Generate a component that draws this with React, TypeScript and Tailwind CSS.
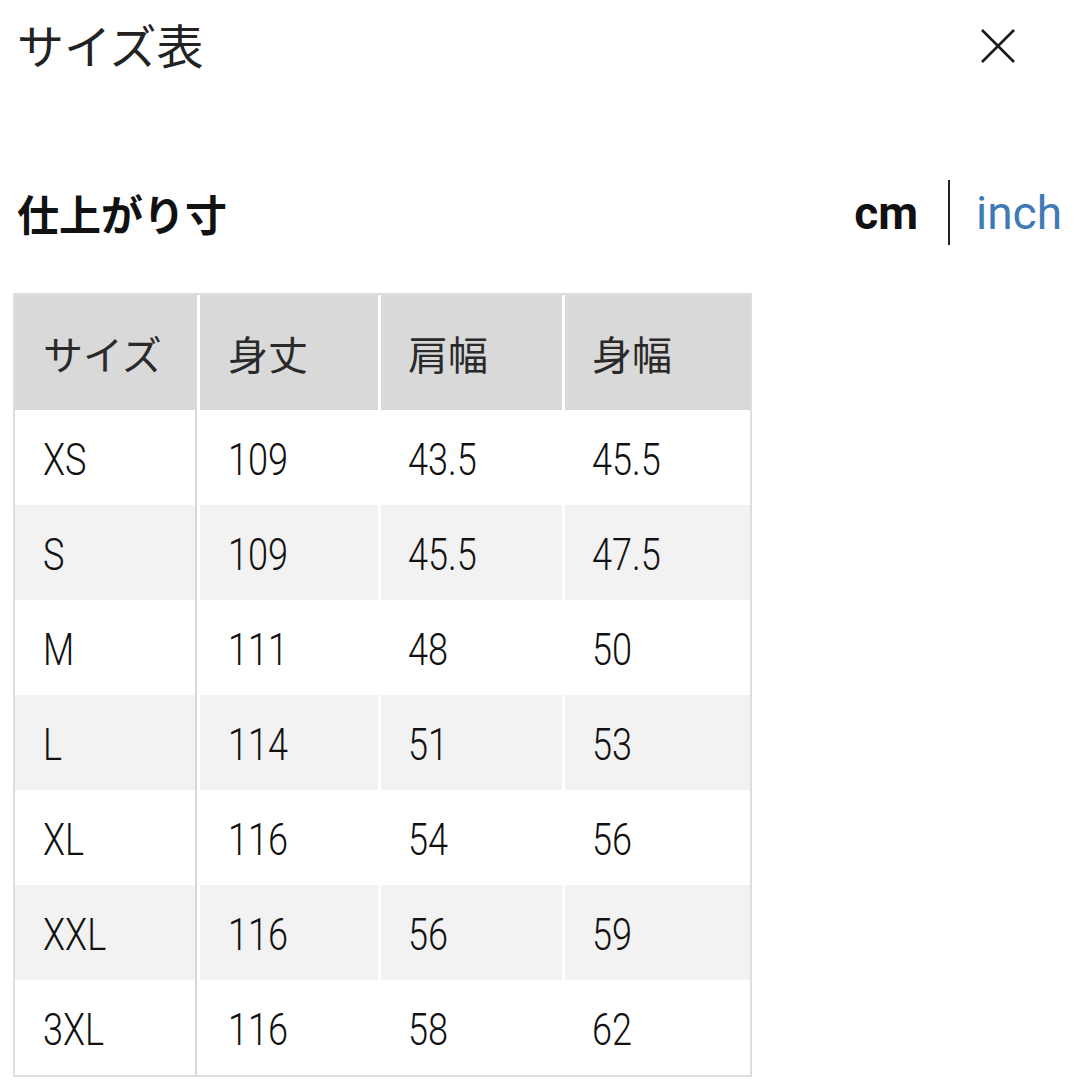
import React from "react";

const headers = ["サイズ", "身丈", "肩幅", "身幅"];
const rows: string[][] = [
  ["XS", "109", "43.5", "45.5"],
  ["S", "109", "45.5", "47.5"],
  ["M", "111", "48", "50"],
  ["L", "114", "51", "53"],
  ["XL", "116", "54", "56"],
  ["XXL", "116", "56", "59"],
  ["3XL", "116", "58", "62"],
];

const jp = { fontFamily: '"Noto Sans CJK JP", "Noto Sans", sans-serif' };
const num = { fontFamily: 'Roboto, "Liberation Sans", sans-serif' };
const latin = { fontFamily: 'Roboto, "Liberation Sans", sans-serif' };

export default function App() {
  return (
    <div className="w-[1080px] h-[1080px] bg-white overflow-hidden text-[#1f1f1f]">
      <div className="flex items-start justify-between pl-[17px] pr-[63px] pt-[20px]">
        <div className="text-[47px] leading-none font-normal text-[#222]" style={jp}>サイズ表</div>
        <svg width="38" height="38" viewBox="0 0 38 38" className="mt-[7px]">
          <path d="M3 3 L35 35 M35 3 L3 35" stroke="#1a1a1a" strokeWidth="2.6" fill="none" />
        </svg>
      </div>

      <div className="mt-[113px] h-[65px] flex items-center justify-between pl-[17px] pr-[18px]">
        <div className="text-[42px] leading-none font-bold text-[#111]" style={jp}>仕上がり寸</div>
        <div className="flex items-center h-full">
          <span className="text-[46px] leading-none font-bold text-[#111]" style={latin}>cm</span>
          <span className="w-[2px] h-[65px] bg-[#222] ml-[30px] mr-[26px]" />
          <span className="text-[46px] leading-none text-[#3f7ab5]" style={latin}>inch</span>
        </div>
      </div>

      <div className="mt-[48px] ml-[13px] w-[739px] border-2 border-[#dedede] bg-white">
        <div className="grid grid-cols-[182px_178px_181px_185px] gap-x-[3px]">
          {headers.map((h, i) => (
            <div
              key={h}
              className={`h-[115px] bg-[#d9d9d9] flex items-center text-[40px] leading-none text-[#2a2a2a] ${i < 2 ? "pl-[28px]" : "pl-[27px]"}`}
              style={jp}
            >
              {h}
            </div>
          ))}
          {rows.map((r, ri) =>
            r.map((c, ci) => (
              <div
                key={`${ri}-${ci}`}
                className={`h-[95px] flex items-center text-[44px] leading-none font-light text-[#111] ${ri % 2 === 1 ? "bg-[#f2f2f2]" : "bg-white"} ${ci === 0 ? "pl-[28px] border-r-2 border-[#d8d8d8]" : ci === 1 ? "pl-[28px]" : "pl-[27px]"}`}
                style={num}
              >
                <span className="inline-block origin-left scale-x-[0.82] translate-y-[2px]">{c}</span>
              </div>
            ))
          )}
        </div>
      </div>
    </div>
  );
}
